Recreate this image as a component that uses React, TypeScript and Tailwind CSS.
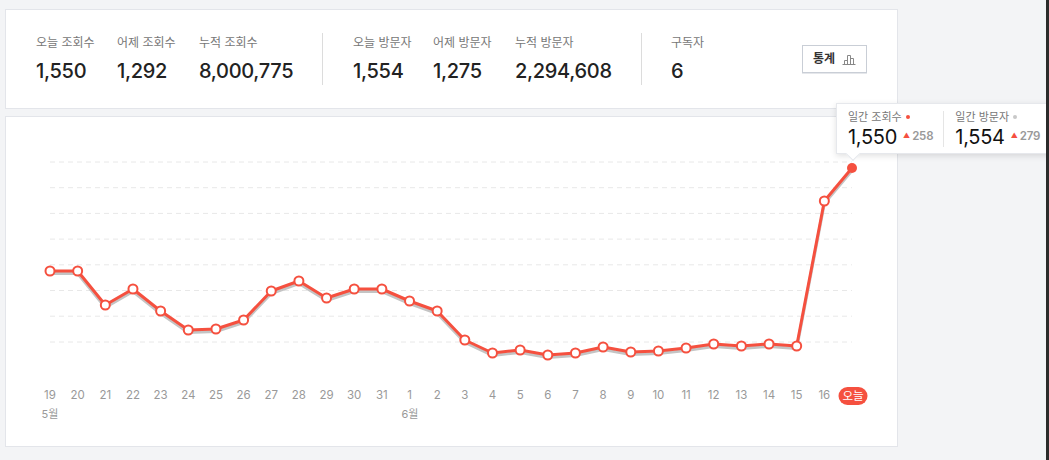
import * as React from 'react'

const font = { fontFamily: 'Inter, "Noto Sans CJK KR", "Noto Sans", sans-serif' }

const stats = [
  [
    { label: '오늘 조회수', value: '1,550', w: 'w-[81px]' },
    { label: '어제 조회수', value: '1,292', w: 'w-[82px]' },
    { label: '누적 조회수', value: '8,000,775', w: 'w-[123px]' },
  ],
  [
    { label: '오늘 방문자', value: '1,554', w: 'w-[80px]' },
    { label: '어제 방문자', value: '1,275', w: 'w-[82px]' },
    { label: '누적 방문자', value: '2,294,608', w: 'w-[126px]' },
  ],
]

const days = ['19', '20', '21', '22', '23', '24', '25', '26', '27', '28', '29', '30', '31', '1', '2', '3', '4', '5', '6', '7', '8', '9', '10', '11', '12', '13', '14', '15', '16']
const ys = [271, 271, 305, 289, 311, 330, 329, 320, 291, 281, 298, 289, 289, 301, 311, 340, 353, 350, 355, 353, 347, 352, 351, 348, 344, 346, 344, 346, 201, 168]
const grid = [162, 187.7, 213.4, 239.1, 264.8, 290.5, 316.2, 342]
const x0 = 50
const step = (852 - 50) / 29

const StatCol = ({ label, value, w }: { label: string; value: string; w: string }) => (
  <div className={`${w} flex flex-col shrink-0`}>
    <span className="text-[12px] leading-4 text-[#777]">{label}</span>
    <span className="mt-2 text-[20px] leading-6 font-medium text-[#222] tracking-[-0.3px]">{value}</span>
  </div>
)

const BarIcon = () => (
  <svg width="14" height="12" viewBox="0 0 14 12" fill="none" stroke="#888" strokeWidth="1">
    <path d="M0.5 11.5h13" />
    <path d="M2.5 11.5v-4h3v4" />
    <path d="M5.5 11.5v-9h3v9" />
    <path d="M8.5 11.5v-6h3v6" />
  </svg>
)

const Chart = () => {
  const pts = ys.map((y, i) => [x0 + i * step, y])
  const line = pts.map(p => p.join(',')).join(' ')
  const shadow = pts.map(([x, y]) => `${x},${y + 2.5}`).join(' ')
  return (
    <svg width="891" height="329" viewBox="6 117 891 329" className="block">
      {grid.map(y => (
        <line key={y} x1={50} x2={852} y1={y} y2={y} stroke="#e8e8e8" strokeWidth="1" strokeDasharray="5 4" />
      ))}
      <polyline points={shadow} fill="none" stroke="#c4c4c4" strokeWidth="3" strokeLinejoin="round" />
      <polyline points={line} fill="none" stroke="#f5503f" strokeWidth="3" strokeLinejoin="round" />
      {pts.slice(0, -1).map(([x, y], i) => (
        <circle key={i} cx={x} cy={y} r="4.5" fill="#fff" stroke="#f5503f" strokeWidth="2" />
      ))}
      <circle cx={852} cy={168} r="5" fill="#f5503f" />
      {days.map((d, i) => (
        <text key={d + i} x={x0 + i * step} y={399} textAnchor="middle" fontSize="11.5" fill="#999" style={font}>{d}</text>
      ))}
      <text x={50} y={418} textAnchor="middle" fontSize="11" fill="#999" style={font}>5월</text>
      <text x={410} y={418} textAnchor="middle" fontSize="11" fill="#999" style={font}>6월</text>
      <rect x={838.5} y={387} width={29} height={18} rx={9} fill="#f5503f" />
      <text x={853} y={400} textAnchor="middle" fontSize="11.5" fill="#fff" style={font}>오늘</text>
    </svg>
  )
}

const TipCol = ({ label, value, diff, dot }: { label: string; value: string; diff: string; dot: string }) => (
  <div className="flex flex-col">
    <div className="flex items-center gap-[4px]">
      <span className="text-[11px] leading-4 text-[#777]">{label}</span>
      <span className={`size-[4px] rounded-full ${dot}`} />
    </div>
    <div className="flex items-center">
      <span className="text-[20px] leading-6 text-[#111] tracking-[-0.3px]">{value}</span>
      <span className="ml-[6px] mr-[2px] text-[7px] text-[#f5503f]">▲</span>
      <span className="text-[11.5px] font-semibold text-[#999] tracking-[-0.2px]">{diff}</span>
    </div>
  </div>
)

export default function App() {
  return (
    <div className="w-[1049px] h-[460px] flex bg-[#f3f4f6] overflow-hidden" style={font}>
      <div className="relative flex-1 overflow-hidden pl-[5px] pt-[9px]">
        <div className="w-[893px] h-[100px] bg-white border border-[#e3e5ea] flex items-center pl-[30px] pr-[30px]">
          {stats[0].map(s => <StatCol key={s.label} {...s} />)}
          <div className="w-px h-[52px] bg-[#dcdcdc] shrink-0" />
          <div className="pl-[30px] flex">
            {stats[1].map(s => <StatCol key={s.label} {...s} />)}
          </div>
          <div className="w-px h-[52px] bg-[#dcdcdc] shrink-0" />
          <div className="pl-[29px]">
            <StatCol label="구독자" value="6" w="w-[60px]" />
          </div>
          <div className="flex-1" />
          <button className="w-[65px] h-[28px] border border-[#c9ced6] bg-white flex items-center justify-center gap-[7px] shadow-[0_1px_0_#e5e7eb]">
            <span className="text-[12px] font-semibold text-[#333]">통계</span>
            <BarIcon />
          </button>
        </div>
        <div className="mt-[7px] w-[893px] h-[331px] bg-white border border-[#e3e5ea]">
          <Chart />
        </div>
        <div className="absolute left-[836px] top-[103px] w-[240px] h-[51px] bg-white border border-[#e6e8ec] shadow-[0_2px_6px_rgba(0,0,0,0.12)] flex items-center pl-[11px]">
          <TipCol label="일간 조회수" value="1,550" diff="258" dot="bg-[#f5503f]" />
          <div className="w-px h-[36px] bg-[#e5e5e5] ml-[10px] mr-[11px]" />
          <TipCol label="일간 방문자" value="1,554" diff="279" dot="bg-[#c8c8c8]" />
          <div className="absolute left-[11px] -bottom-[6px] size-[10px] rotate-45 bg-white border-r border-b border-[#e6e8ec]" />
        </div>
      </div>
      <div className="w-[3px] h-full bg-[#2b2b2b]" />
    </div>
  )
}
